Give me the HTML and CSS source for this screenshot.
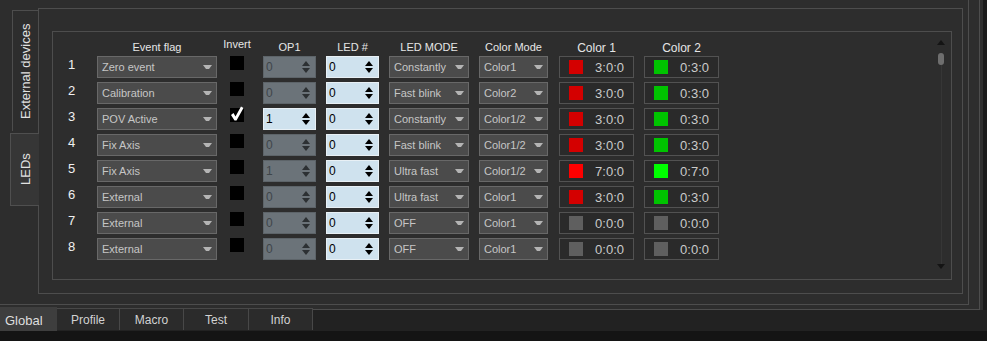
FILE: index.html
```html
<!DOCTYPE html>
<html>
<head>
    <meta charset="UTF-8">
    <title>LEDs</title>
    <link rel="stylesheet" href="styles.css">
</head>
<body>
    <div class="window">
        <div class="workspace">
            <div class="shell-outer">
                <div class="shell-mid">
                    <div class="side-tabs">
                        <div class="vtab">External devices</div>
                        <div class="vtab active">LEDs</div>
                    </div>
                    <div class="page">
                        <div class="group">
                            <div class="leds">
                                <span></span>
                                <span class="hd"><span class="hd-in w-event">Event flag</span></span>
                                <span class="hd hd-inv"><span class="hd-in w-chk">Invert</span></span>
                                <span class="hd"><span class="hd-in w-spin">OP1</span></span>
                                <span class="hd"><span class="hd-in w-spin">LED #</span></span>
                                <span class="hd"><span class="hd-in w-mode">LED MODE</span></span>
                                <span class="hd"><span class="hd-in w-cmode">Color Mode</span></span>
                                <span class="hd hd-color"><span class="hd-in w-color">Color 1</span></span>
                                <span class="hd hd-color"><span class="hd-in w-color">Color 2</span></span>

                                <span class="num">1</span>
                                <span class="combo event">Zero event</span>
                                <span class="chk"></span>
                                <span class="spin off">0<i class="updn"></i></span>
                                <span class="spin">0<i class="updn"></i></span>
                                <span class="combo mode">Constantly</span>
                                <span class="combo cmode">Color1</span>
                                <span class="swbox"><i class="sw red3"></i>3:0:0</span>
                                <span class="swbox"><i class="sw green3"></i>0:3:0</span>

                                <span class="num">2</span>
                                <span class="combo event">Calibration</span>
                                <span class="chk"></span>
                                <span class="spin off">0<i class="updn"></i></span>
                                <span class="spin">0<i class="updn"></i></span>
                                <span class="combo mode">Fast blink</span>
                                <span class="combo cmode">Color2</span>
                                <span class="swbox"><i class="sw red3"></i>3:0:0</span>
                                <span class="swbox"><i class="sw green3"></i>0:3:0</span>

                                <span class="num">3</span>
                                <span class="combo event">POV Active</span>
                                <span class="chk checked"><svg width="14" height="16" viewBox="0 0 14 16"><polygon points="1,9 3.5,7 5.5,10.5 11,0.5 13.5,2 6.5,14.5 4.5,14.5" fill="#fff"/></svg></span>
                                <span class="spin">1<i class="updn"></i></span>
                                <span class="spin">0<i class="updn"></i></span>
                                <span class="combo mode">Constantly</span>
                                <span class="combo cmode">Color1/2</span>
                                <span class="swbox"><i class="sw red3"></i>3:0:0</span>
                                <span class="swbox"><i class="sw green3"></i>0:3:0</span>

                                <span class="num">4</span>
                                <span class="combo event">Fix Axis</span>
                                <span class="chk"></span>
                                <span class="spin off">0<i class="updn"></i></span>
                                <span class="spin">0<i class="updn"></i></span>
                                <span class="combo mode">Fast blink</span>
                                <span class="combo cmode">Color1/2</span>
                                <span class="swbox"><i class="sw red3"></i>3:0:0</span>
                                <span class="swbox"><i class="sw green3"></i>0:3:0</span>

                                <span class="num">5</span>
                                <span class="combo event">Fix Axis</span>
                                <span class="chk"></span>
                                <span class="spin off">1<i class="updn"></i></span>
                                <span class="spin">0<i class="updn"></i></span>
                                <span class="combo mode">Ultra fast</span>
                                <span class="combo cmode">Color1/2</span>
                                <span class="swbox"><i class="sw red7"></i>7:0:0</span>
                                <span class="swbox"><i class="sw green7"></i>0:7:0</span>

                                <span class="num">6</span>
                                <span class="combo event">External</span>
                                <span class="chk"></span>
                                <span class="spin off">0<i class="updn"></i></span>
                                <span class="spin">0<i class="updn"></i></span>
                                <span class="combo mode">Ultra fast</span>
                                <span class="combo cmode">Color1</span>
                                <span class="swbox"><i class="sw red3"></i>3:0:0</span>
                                <span class="swbox"><i class="sw green3"></i>0:3:0</span>

                                <span class="num">7</span>
                                <span class="combo event">External</span>
                                <span class="chk"></span>
                                <span class="spin off">0<i class="updn"></i></span>
                                <span class="spin">0<i class="updn"></i></span>
                                <span class="combo mode">OFF</span>
                                <span class="combo cmode">Color1</span>
                                <span class="swbox"><i class="sw dark"></i>0:0:0</span>
                                <span class="swbox"><i class="sw dark"></i>0:0:0</span>

                                <span class="num">8</span>
                                <span class="combo event">External</span>
                                <span class="chk"></span>
                                <span class="spin off">0<i class="updn"></i></span>
                                <span class="spin">0<i class="updn"></i></span>
                                <span class="combo mode">OFF</span>
                                <span class="combo cmode">Color1</span>
                                <span class="swbox"><i class="sw dark"></i>0:0:0</span>
                                <span class="swbox"><i class="sw dark"></i>0:0:0</span>
                            </div>
                            <div class="scroll">
                                <i class="sc-up"></i>
                                <i class="sc-thumb"></i>
                                <i class="sc-track"></i>
                                <i class="sc-down"></i>
                            </div>
                        </div>
                    </div>
                </div>
            </div>
            <div class="edge"></div>
        </div>
        <div class="tabbar">
            <div class="tab active">Global</div>
            <div class="tab t-profile">Profile</div>
            <div class="tab t-macro">Macro</div>
            <div class="tab t-test">Test</div>
            <div class="tab t-info">Info</div>
        </div>
        <div class="footer"></div>
    </div>
</body>
</html>
```
FILE: styles.css
```css
/* Reset */
* {
    margin: 0;
    padding: 0;
    box-sizing: border-box;
}

body {
    background-color: #141414;
    font-family: "Liberation Sans", Arial, sans-serif;
}

.window {
    width: 987px;
    height: 341px;
    background-color: #222222;
    overflow: hidden;
}

/* frames */
.workspace {
    display: flex;
    height: 310px;
    background-color: #2d2d2d;
}

.shell-outer {
    width: 980px;
    height: 310px;
    border-right: 1px solid #4d4d4d;
    border-bottom: 1px solid #4d4d4d;
}

.shell-mid {
    display: flex;
    width: 969px;
    height: 305px;
    border-right: 1px solid #4d4d4d;
    border-bottom: 1px solid #4d4d4d;
}

.edge {
    width: 7px;
    background-color: #1b1b1b;
    border-left: 3px solid #2f2f2f;
}

/* vertical tabs */
.side-tabs {
    width: 38px;
    flex-shrink: 0;
    padding-top: 10px;
    display: flex;
    flex-direction: column;
    align-items: flex-end;
}

.vtab {
    writing-mode: vertical-rl;
    transform: rotate(180deg);
    display: flex;
    align-items: center;
    justify-content: center;
    font-size: 13px;
    color: #e2e2e2;
}

.vtab:first-child {
    width: 26px;
    height: 121px;
    border-right: 1px solid #4d4d4d;
    border-bottom: 1px solid #4d4d4d;
}

.vtab.active {
    width: 29px;
    height: 73px;
    margin-top: 2px;
    margin-right: -1px;
    background-color: #363636;
    border: 1px solid #4f4f4f;
    border-left: none;
}

.page {
    margin-top: 8px;
    width: 925px;
    height: 286px;
    border: 1px solid #4d4d4d;
    padding: 22px 0 0 13px;
}

.group {
    width: 900px;
    height: 249px;
    border: 1px solid #4d4d4d;
    display: flex;
}

/* table */
.leds {
    width: 882px;
    display: grid;
    grid-template-columns: 44px 133px 33px 63px 63px 90px 80px 85px 76px;
    grid-template-rows: 24px repeat(8, 26px);
    align-items: start;
    justify-items: start;
}

.hd {
    padding-top: 9px;
    font-size: 11px;
    line-height: 12px;
    color: #e6e6e6;
}

.hd-inv {
    padding-top: 6px;
}

.hd-color {
    padding-top: 10px;
    font-size: 12px;
    line-height: 13px;
}

.hd-in {
    display: flex;
    justify-content: center;
    white-space: nowrap;
}

.w-event { width: 120px; }
.w-chk { width: 14px; }
.w-spin { width: 53px; }
.w-mode { width: 80px; }
.w-cmode { width: 69px; }
.w-color { width: 75px; }

.num {
    padding-left: 15px;
    font-size: 13px;
    line-height: 17px;
    color: #f0f0f0;
}

.combo {
    height: 22px;
    display: flex;
    align-items: center;
    justify-content: space-between;
    padding: 0 4px 0 4px;
    background-color: #4b4b4b;
    border: 1px solid #686868;
    color: #c6c6c6;
    font-size: 11px;
    white-space: nowrap;
}

.combo::after {
    content: "";
    width: 3px;
    height: 0;
    border-top: 4px solid #b4b4b4;
    border-left: 3px solid transparent;
    border-right: 3px solid transparent;
}

.combo.event { width: 120px; }
.combo.mode { width: 80px; }
.combo.cmode { width: 69px; }

.chk {
    width: 14px;
    height: 14px;
    background-color: #000000;
}

.chk.checked svg {
    display: block;
    margin-top: -2px;
}

.spin {
    width: 53px;
    height: 22px;
    display: flex;
    align-items: center;
    justify-content: space-between;
    padding: 0 5px 0 2px;
    background-color: #cfe2ee;
    border: 1px solid #e8f0f5;
    color: #000000;
    font-size: 12px;
}

.spin.off {
    background-color: #6b7379;
    border-color: #5d6469;
    color: #3f4549;
}

.updn {
    display: flex;
    flex-direction: column;
    gap: 2px;
}

.updn::before,
.updn::after {
    content: "";
    border-left: 4px solid transparent;
    border-right: 4px solid transparent;
}

.updn::before {
    border-bottom: 5px solid #000000;
}

.updn::after {
    border-top: 5px solid #000000;
}

.spin.off .updn::before {
    border-bottom-color: #2c3033;
}

.spin.off .updn::after {
    border-top-color: #2c3033;
}

.swbox {
    width: 75px;
    height: 22px;
    display: flex;
    align-items: center;
    justify-content: space-between;
    padding: 0 9px;
    border: 1px solid #525252;
    background-color: #2a2a2a;
    color: #cbcbcb;
    font-size: 13px;
}

.sw {
    width: 14px;
    height: 14px;
}

.sw.red3 { background-color: #d40000; }
.sw.red7 { background-color: #ff0000; }
.sw.green3 { background-color: #00c400; }
.sw.green7 { background-color: #00ff00; }
.sw.dark { background-color: #5f5f5f; }

/* scrollbar */
.scroll {
    width: 12px;
    display: flex;
    flex-direction: column;
    align-items: center;
    padding: 8px 0 10px;
}

.sc-up {
    border-left: 4px solid transparent;
    border-right: 4px solid transparent;
    border-bottom: 5px solid #141414;
}

.sc-thumb {
    width: 6px;
    height: 12px;
    margin-top: 8px;
    border-radius: 3px;
    background-color: #6e6e6e;
}

.sc-track {
    flex: 1;
    width: 1px;
    background-color: #363636;
}

.sc-down {
    border-left: 4px solid transparent;
    border-right: 4px solid transparent;
    border-top: 5px solid #141414;
}

/* bottom tabs */
.tabbar {
    display: flex;
    height: 21px;
    align-items: flex-start;
}

.tab {
    height: 22px;
    margin-top: -2px;
    display: flex;
    align-items: center;
    justify-content: center;
    background-color: #2b2b2b;
    border-top: 1px solid #484848;
    border-right: 1px solid #484848;
    color: #d2d2d2;
    font-size: 12px;
}

.tab.active {
    width: 57px;
    height: 24px;
    margin-top: -3px;
    justify-content: flex-start;
    padding: 3px 0 0 5px;
    background-color: #3e3e3e;
    border: none;
    font-size: 13px;
    color: #dedede;
}

.t-profile { width: 63px; }
.t-macro { width: 64px; }
.t-test { width: 65px; }
.t-info { width: 64px; }

.footer {
    height: 10px;
    background-color: #141414;
}
```
